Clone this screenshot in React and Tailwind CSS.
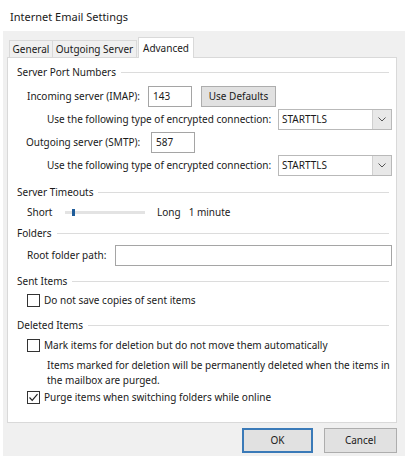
import React from "react";

// one group caption with the etched rule running to the right edge
function GroupHead({ label, mt }) {
  return (
    <div className={`flex items-center h-4 pl-[9px] pr-[7px] ${mt}`}>
      <span className="whitespace-nowrap">{label}</span>
      <div className="flex-1 h-px bg-[#dcdcdc] ml-[5px]" />
    </div>
  );
}

function Select({ value }) {
  return (
    <div className="flex h-[21px] w-[114px] border border-[#b9b9b9] bg-white">
      <div className="flex-1 flex items-center pl-[3px]">{value}</div>
      <div className="w-[19px] flex items-center justify-center bg-[#e8e8e8] border-l border-[#d0d0d0]">
        <svg width="8" height="5" viewBox="0 0 8 5">
          <path d="M0.5 0.5 L4 4 L7.5 0.5" fill="none" stroke="#555" strokeWidth="1" />
        </svg>
      </div>
    </div>
  );
}

function Check({ checked }) {
  return (
    <div className="w-[13px] h-[13px] shrink-0 border border-[#333] bg-white flex items-center justify-center">
      {checked && (
        <svg width="11" height="11" viewBox="0 0 11 11">
          <path d="M1.5 5.5 L4.2 8.3 L9.5 2.2" fill="none" stroke="#222" strokeWidth="1.2" />
        </svg>
      )}
    </div>
  );
}

export default function App() {
  return (
    <div
      className="w-[408px] h-[460px] bg-white text-[#1a1a1a] text-[10px] whitespace-nowrap overflow-hidden"
      style={{ fontFamily: '"Noto Sans", "Open Sans", sans-serif' }}
    >
      {/* title */}
      <div className="h-[31px] pl-[10px] pt-[9px] text-[11px]">Internet Email Settings</div>

      <div className="mx-[3px] h-[425px] bg-[#f0f0f0] pl-[4px] pr-[8px] pt-[6px]">
        {/* tabs */}
        <div className="flex items-end h-[20px] pl-[2px]">
          <div className="h-[17px] w-[44px] flex items-center justify-center border border-b-0 border-[#d9d9d9]">General</div>
          <div className="h-[17px] w-[84px] flex items-center justify-center border border-b-0 border-l-0 border-[#d9d9d9]">Outgoing Server</div>
          <div className="h-[21px] w-[56px] ml-[1px] -mb-px flex items-center justify-center bg-white border border-b-0 border-[#d9d9d9] relative z-10">Advanced</div>
        </div>

        {/* tab panel */}
        <div className="h-[366px] bg-white border border-[#d9d9d9] pt-[6px]">
          <GroupHead label="Server Port Numbers" mt="" />

          <div className="flex items-center h-[21px] mt-[6px] pl-[19px]">
            <span className="w-[121px]">Incoming server (IMAP):</span>
            <div className="w-[44px] h-[21px] border border-[#a5a5a5] flex items-center pl-[4px]">143</div>
            <div className="ml-[9px] w-[75px] h-[21px] bg-[#e1e1e1] border border-[#adadad] flex items-center justify-center">Use Defaults</div>
          </div>

          <div className="flex items-center h-[21px] mt-[2px] pl-[39px]">
            <span className="w-[231px]">Use the following type of encrypted connection:</span>
            <Select value="STARTTLS" />
          </div>

          <div className="flex items-center h-[21px] mt-[2px] pl-[18px]">
            <span className="w-[125px]">Outgoing server (SMTP):</span>
            <div className="w-[44px] h-[21px] border border-[#a5a5a5] flex items-center pl-[4px]">587</div>
          </div>

          <div className="flex items-center h-[21px] mt-[2px] pl-[39px]">
            <span className="w-[231px]">Use the following type of encrypted connection:</span>
            <Select value="STARTTLS" />
          </div>

          <GroupHead label="Server Timeouts" mt="mt-[8px]" />

          <div className="flex items-center h-4 mt-[4px] pl-[19px]">
            <span className="w-[38px]">Short</span>
            <div className="relative w-[80px] h-[3px] bg-[#e3e3e3]">
              <div className="absolute left-[7px] -top-[2px] w-[3px] h-[7px] bg-[#1f5c99]" />
            </div>
            <span className="ml-[12px]">Long</span>
            <span className="ml-[8px]">1 minute</span>
          </div>

          <GroupHead label="Folders" mt="mt-[5px]" />

          <div className="flex items-center h-[21px] mt-[4px] pl-[19px]">
            <span className="w-[88px]">Root folder path:</span>
            <div className="w-[277px] h-[21px] border border-[#a5a5a5]" />
          </div>

          <GroupHead label="Sent Items" mt="mt-[7px]" />

          <div className="flex items-center h-4 mt-[3px] pl-[19px]">
            <Check />
            <span className="ml-[4px]">Do not save copies of sent items</span>
          </div>

          <GroupHead label="Deleted Items" mt="mt-[9px]" />

          <div className="flex items-center h-4 mt-[4px] pl-[19px]">
            <Check />
            <span className="ml-[4px]">Mark items for deletion but do not move them automatically</span>
          </div>

          <div className="mt-[5px] pl-[39px] leading-[15px]">
            Items marked for deletion will be permanently deleted when the items in
            <br />
            the mailbox are purged.
          </div>

          <div className="flex items-center h-4 mt-[1px] pl-[19px]">
            <Check checked />
            <span className="ml-[4px]">Purge items when switching folders while online</span>
          </div>
        </div>

        {/* dialog buttons */}
        <div className="flex justify-end gap-[11px] mt-[5px]">
          <div className="w-[71px] h-[25px] bg-[#e1e1e1] border-2 border-[#3a7ab8] flex items-center justify-center">OK</div>
          <div className="w-[73px] h-[25px] bg-[#e1e1e1] border border-[#adadad] flex items-center justify-center">Cancel</div>
        </div>
      </div>
    </div>
  );
}
